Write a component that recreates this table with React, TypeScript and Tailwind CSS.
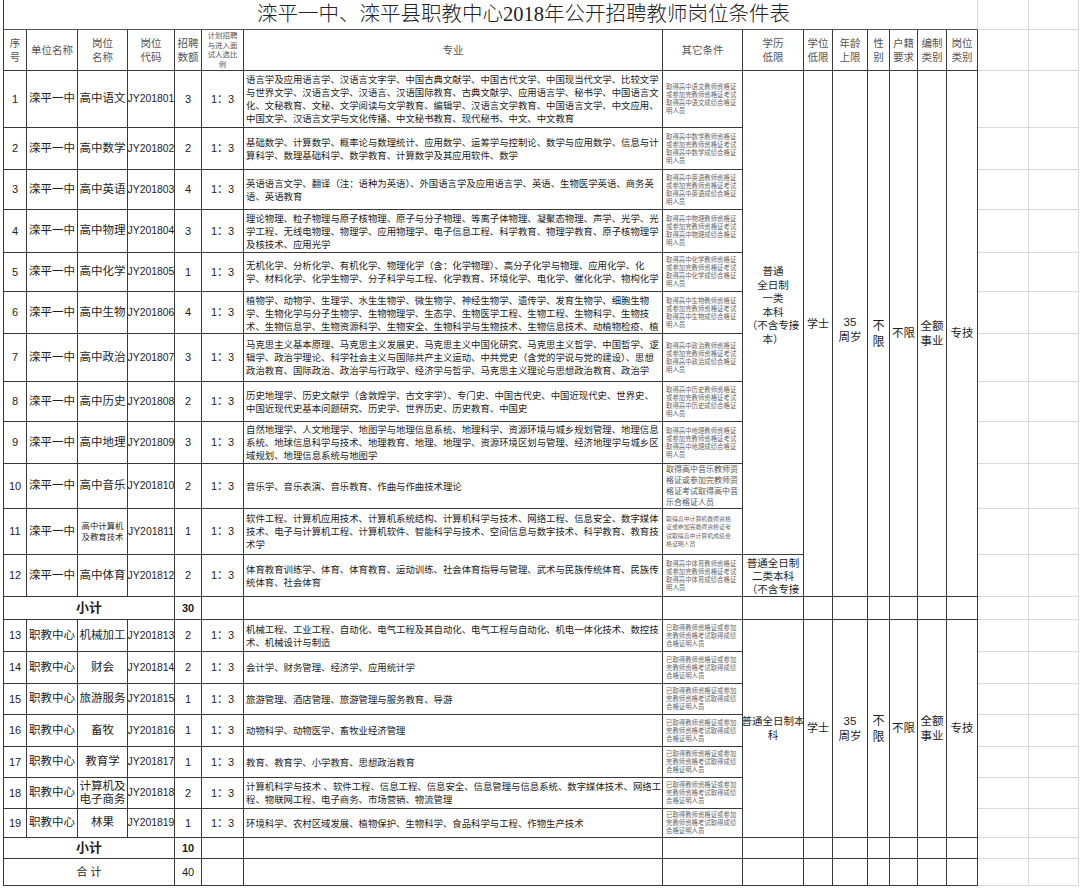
import React from 'react';

const C = 'border-r border-b border-[#3a3a3a] overflow-hidden';
const G = 'border-r border-b border-[#d9d9d9]';
const CENTER = 'flex flex-col items-center justify-center text-center';

type HS = { n: string; name: React.ReactNode; code: string; num: string; spec: string[]; other: React.ReactNode; top?: boolean };

const std = (s: string) => ['取得高中' + s + '教师资格证', '或参加完教师资格证考试', '取得高中' + s + '成绩合格证', '明人员'];
const voc = ['已取得教师资格证或参加', '完教师资格考试取得成绩', '合格证明人员'];

const Lines = ({ lines }: { lines: string[] }) => (
  <>
    {lines.map((l, i) => (
      <div key={i} className="whitespace-nowrap">{l}</div>
    ))}
  </>
);

const Other = ({ lines }: { lines: string[] }) => (
  <div className="text-[6.4px] leading-[8px] text-[#666] pl-[3px]">
    <Lines lines={lines} />
  </div>
);

const hs: HS[] = [
  {
    n: '1', name: '高中语文', code: 'JY201801', num: '3', top: true,
    spec: [
      '语言学及应用语言学、汉语言文字学、中国古典文献学、中国古代文学、中国现当代文学、比较文学',
      '与世界文学、汉语言文学、汉语言、汉语国际教育、古典文献学、应用语言学、秘书学、中国语言文',
      '化、文秘教育、文秘、文学阅读与文学教育、编辑学、汉语言文学教育、中国语言文学、中文应用、',
      '中国文学、汉语言文学与文化传播、中文秘书教育、现代秘书、中文、中文教育',
    ],
    other: <Other lines={std('语文')} />,
  },
  {
    n: '2', name: '高中数学', code: 'JY201802', num: '2',
    spec: [
      '基础数学、计算数学、概率论与数理统计、应用数学、运筹学与控制论、数学与应用数学、信息与计',
      '算科学、数理基础科学、数学教育、计算数学及其应用软件、数学',
    ],
    other: <Other lines={std('数学')} />,
  },
  {
    n: '3', name: '高中英语', code: 'JY201803', num: '4',
    spec: [
      '英语语言文学、翻译（注：语种为英语）、外国语言学及应用语言学、英语、生物医学英语、商务英',
      '语、英语教育',
    ],
    other: <Other lines={std('英语')} />,
  },
  {
    n: '4', name: '高中物理', code: 'JY201804', num: '3',
    spec: [
      '理论物理、粒子物理与原子核物理、原子与分子物理、等离子体物理、凝聚态物理、声学、光学、光',
      '学工程、无线电物理、物理学、应用物理学、电子信息工程、科学教育、物理学教育、原子核物理学',
      '及核技术、应用光学',
    ],
    other: <Other lines={std('物理')} />,
  },
  {
    n: '5', name: '高中化学', code: 'JY201805', num: '1',
    spec: [
      '无机化学、分析化学、有机化学、物理化学（含：化学物理）、高分子化学与物理、应用化学、化',
      '学、材料化学、化学生物学、分子科学与工程、化学教育、环境化学、电化学、催化化学、物构化学',
    ],
    other: <Other lines={std('化学')} />,
  },
  {
    n: '6', name: '高中生物', code: 'JY201806', num: '4', top: true,
    spec: [
      '植物学、动物学、生理学、水生生物学、微生物学、神经生物学、遗传学、发育生物学、细胞生物',
      '学、生物化学与分子生物学、生物物理学、生态学、生物医学工程、生物工程、生物科学、生物技',
      '术、生物信息学、生物资源科学、生物安全、生物科学与生物技术、生物信息技术、动植物检疫、植',
      '物生物技术、动物生物技术、生物资源科学、生物系统工程、生物教育、生物学',
    ],
    other: <Other lines={std('生物')} />,
  },
  {
    n: '7', name: '高中政治', code: 'JY201807', num: '3',
    spec: [
      '马克思主义基本原理、马克思主义发展史、马克思主义中国化研究、马克思主义哲学、中国哲学、逻',
      '辑学、政治学理论、科学社会主义与国际共产主义运动、中共党史（含党的学说与党的建设）、思想',
      '政治教育、国际政治、政治学与行政学、经济学与哲学、马克思主义理论与思想政治教育、政治学',
    ],
    other: <Other lines={std('政治')} />,
  },
  {
    n: '8', name: '高中历史', code: 'JY201808', num: '2',
    spec: [
      '历史地理学、历史文献学（含敦煌学、古文字学）、专门史、中国古代史、中国近现代史、世界史、',
      '中国近现代史基本问题研究、历史学、世界历史、历史教育、中国史',
    ],
    other: <Other lines={std('历史')} />,
  },
  {
    n: '9', name: '高中地理', code: 'JY201809', num: '3',
    spec: [
      '自然地理学、人文地理学、地图学与地理信息系统、地理科学、资源环境与城乡规划管理、地理信息',
      '系统、地球信息科学与技术、地理教育、地理、地理学、资源环境区划与管理、经济地理学与城乡区',
      '域规划、地理信息系统与地图学',
    ],
    other: <Other lines={std('地理')} />,
  },
  {
    n: '10', name: '高中音乐', code: 'JY201810', num: '2',
    spec: ['音乐学、音乐表演、音乐教育、作曲与作曲技术理论'],
    other: (
      <div className="text-[8px] leading-[11px] text-[#555] pl-[3px]">
        <Lines lines={['取得高中音乐教师资', '格证或参加完教师资', '格证考试取得高中音', '乐合格证人员']} />
      </div>
    ),
  },
  {
    n: '11',
    name: (
      <div className="text-[8.4px] leading-[11px]">
        <div>高中计算机</div>
        <div>及教育技术</div>
      </div>
    ),
    code: 'JY201811', num: '1',
    spec: [
      '软件工程、计算机应用技术、计算机系统结构、计算机科学与技术、网络工程、信息安全、数字媒体',
      '技术、电子与计算机工程、计算机软件、智能科学与技术、空间信息与数字技术、科学教育、教育技',
      '术学',
    ],
    other: (
      <div className="text-[5.9px] leading-[8.5px] text-[#666] pl-[3px]">
        <Lines lines={['取得高中计算机教师资格', '证或参加完教师资格证考', '试取得高中计算机成绩合', '格证明人员']} />
      </div>
    ),
  },
  {
    n: '12', name: '高中体育', code: 'JY201812', num: '2',
    spec: [
      '体育教育训练学、体育、体育教育、运动训练、社会体育指导与管理、武术与民族传统体育、民族传',
      '统体育、社会体育',
    ],
    other: <Other lines={std('体育')} />,
  },
];

const vc: HS[] = [
  {
    n: '13', name: '机械加工', code: 'JY201813', num: '2',
    spec: [
      '机械工程、工业工程、自动化、电气工程及其自动化、电气工程与自动化、机电一体化技术、数控技',
      '术、机械设计与制造',
    ],
    other: null,
  },
  { n: '14', name: '财会', code: 'JY201814', num: '2', spec: ['会计学、财务管理、经济学、应用统计学'], other: null },
  { n: '15', name: '旅游服务', code: 'JY201815', num: '1', spec: ['旅游管理、酒店管理、旅游管理与服务教育、导游'], other: null },
  { n: '16', name: '畜牧', code: 'JY201816', num: '1', spec: ['动物科学、动物医学、畜牧业经济管理'], other: null },
  { n: '17', name: '教育学', code: 'JY201817', num: '1', spec: ['教育、教育学、小学教育、思想政治教育'], other: null },
  {
    n: '18',
    name: (
      <div className="leading-[13px]">
        <div>计算机及</div>
        <div>电子商务</div>
      </div>
    ),
    code: 'JY201818', num: '2',
    spec: [
      '计算机科学与技术 、软件工程、信息工程、信息安全、信息管理与信息系统、数字媒体技术、网络工',
      '程、物联网工程、电子商务、市场营销、物流管理',
    ],
    other: null,
  },
  { n: '19', name: '林果', code: 'JY201819', num: '1', spec: ['环境科学、农村区域发展、植物保护、生物科学、食品科学与工程、作物生产技术'], other: null },
];

const Gray = () => (
  <>
    <div className={G} />
    <div className={G} />
  </>
);

const Basic = ({ r, unit }: { r: HS; unit: string }) => (
  <>
    <div className={`${C} ${CENTER} text-[11px]`}>{r.n}</div>
    <div className={`${C} ${CENTER} text-[11.5px] whitespace-nowrap`}>{unit}</div>
    <div className={`${C} ${CENTER} text-[11.5px] whitespace-nowrap`}>{r.name}</div>
    <div className={`${C} ${CENTER} text-[10.4px] whitespace-nowrap`}>{r.code}</div>
    <div className={`${C} ${CENTER} text-[11px]`}>{r.num}</div>
    <div className={`${C} ${CENTER} text-[11px] whitespace-nowrap`}>1：3</div>
    <div
      className={`${C} flex flex-col ${r.top ? 'justify-start pt-[2px]' : 'justify-center'} pl-[2px] text-[9.4px] leading-[13px] text-[#222]`}
    >
      <Lines lines={r.spec} />
    </div>
    <div className={`${C} flex flex-col justify-center`}>{r.other ?? <Other lines={voc} />}</div>
  </>
);

const Empties = () => (
  <>
    {Array.from({ length: 10 }).map((_, i) => (
      <div key={i} className={C} />
    ))}
  </>
);

const Header = ({ lines, small }: { lines: string[]; small?: boolean }) => (
  <div className={`${C} ${CENTER} ${small ? 'text-[7.4px] leading-[9.5px]' : 'text-[10.5px] leading-[14px]'} text-[#555]`}>
    <Lines lines={lines} />
  </div>
);

export default function App() {
  return (
    <div className="w-[1080px] h-[889px] bg-white font-['Liberation_Sans','Noto_Sans_CJK_SC',sans-serif] text-[#1e1e1e]">
      <div className="ml-[3px] border-l border-[#3a3a3a] grid grid-cols-[23px_51px_50px_47px_27px_42px_419px_80px_61px_29px_35px_22px_28px_29px_31px_51px_50px] grid-rows-[30px_41px_57px_42px_40px_43px_39px_42px_48px_40px_42px_45px_46px_42px_23px_32px_32px_31px_32px_31px_31px_29px_21px_27px]">
        {/* title */}
        <div className="col-span-15 border-r border-b border-r-[#d9d9d9] border-b-[#555] flex items-center justify-center pl-[66px] text-[20.5px] font-light text-[#222] font-['Liberation_Serif','Noto_Sans_CJK_SC',serif] whitespace-nowrap">
          滦平一中、滦平县职教中心2018年公开招聘教师岗位条件表
        </div>
        <Gray />

        {/* header */}
        <Header lines={['序', '号']} />
        <Header lines={['单位名称']} />
        <Header lines={['岗位', '名称']} />
        <Header lines={['岗位', '代码']} />
        <Header lines={['招聘', '数额']} />
        <Header small lines={['计划招聘', '与进入面', '试人选比', '例']} />
        <Header lines={['专业']} />
        <Header lines={['其它条件']} />
        <Header lines={['学历', '低限']} />
        <Header lines={['学位', '低限']} />
        <Header lines={['年龄', '上限']} />
        <Header lines={['性', '别']} />
        <Header lines={['户籍', '要求']} />
        <Header lines={['编制', '类别']} />
        <Header lines={['岗位', '类别']} />
        <Gray />

        {hs.map((r, i) => (
          <React.Fragment key={r.n}>
            <Basic r={r} unit="滦平一中" />
            {i === 0 && (
              <>
                <div className={`${C} row-span-11 ${CENTER} text-[10.5px] leading-[13.5px] pb-[14px]`}>
                  <Lines lines={['普通', '全日制', '一类', '本科', '（不含专接', '本）']} />
                </div>
                <div className={`${C} row-span-12 ${CENTER} text-[11px] pb-[18px]`}>学士</div>
                <div className={`${C} row-span-12 ${CENTER} text-[11.5px] leading-[15px] pb-[8px]`}>
                  <div>35</div>
                  <div>周岁</div>
                </div>
                <div className={`${C} row-span-12 ${CENTER} text-[12px] leading-[16px]`}>
                  <div>不</div>
                  <div>限</div>
                </div>
                <div className={`${C} row-span-12 ${CENTER} text-[11.5px]`}>不限</div>
                <div className={`${C} row-span-12 ${CENTER} text-[11.5px] leading-[15px]`}>
                  <div>全额</div>
                  <div>事业</div>
                </div>
                <div className={`${C} row-span-12 ${CENTER} text-[11.5px]`}>专技</div>
              </>
            )}
            {i === 11 && (
              <div className={`${C} flex flex-col items-center justify-start pt-[2px] text-[10.5px] leading-[13px]`}>
                <Lines lines={['普通全日制', '二类本科', '（不含专接', '本）']} />
              </div>
            )}
            <Gray />
          </React.Fragment>
        ))}

        {/* subtotal 1 */}
        <div className={`${C} col-span-4 ${CENTER} text-[13px] font-bold`}>小计</div>
        <div className={`${C} ${CENTER} text-[11px] font-bold`}>30</div>
        <Empties />
        <Gray />

        {vc.map((r, i) => (
          <React.Fragment key={r.n}>
            <Basic r={r} unit="职教中心" />
            {i === 0 && (
              <>
                <div className={`${C} row-span-7 ${CENTER} text-[10.5px] leading-[13.5px]`}>
                  <Lines lines={['普通全日制本', '科']} />
                </div>
                <div className={`${C} row-span-7 ${CENTER} text-[11px]`}>学士</div>
                <div className={`${C} row-span-7 ${CENTER} text-[11.5px] leading-[15px]`}>
                  <div>35</div>
                  <div>周岁</div>
                </div>
                <div className={`${C} row-span-7 ${CENTER} text-[12px] leading-[16px]`}>
                  <div>不</div>
                  <div>限</div>
                </div>
                <div className={`${C} row-span-7 ${CENTER} text-[11.5px]`}>不限</div>
                <div className={`${C} row-span-7 ${CENTER} text-[11.5px] leading-[15px]`}>
                  <div>全额</div>
                  <div>事业</div>
                </div>
                <div className={`${C} row-span-7 ${CENTER} text-[11.5px]`}>专技</div>
              </>
            )}
            <Gray />
          </React.Fragment>
        ))}

        <div className={`${C} col-span-4 ${CENTER} text-[13px] font-bold`}>小计</div>
        <div className={`${C} ${CENTER} text-[11px] font-bold`}>10</div>
        <Empties />
        <Gray />

        <div className={`${C} col-span-4 ${CENTER} text-[11px]`}>合 计</div>
        <div className={`${C} ${CENTER} text-[11px]`}>40</div>
        <Empties />
        <Gray />
      </div>
    </div>
  );
}
